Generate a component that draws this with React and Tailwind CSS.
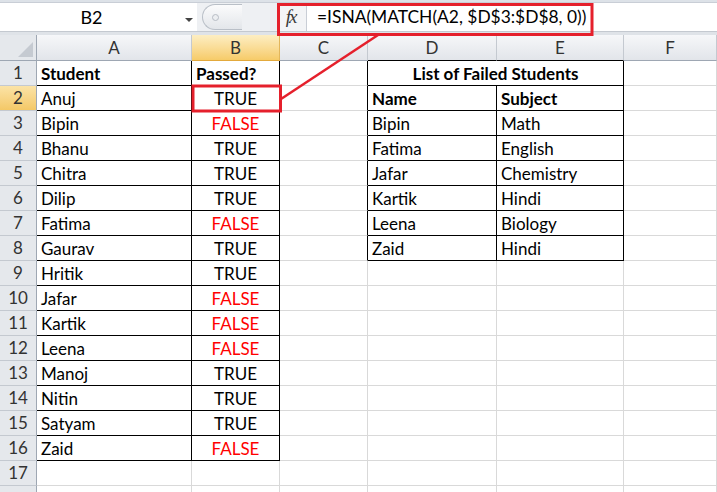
import React from 'react';

const students = [
    ['Anuj', true], ['Bipin', false], ['Bhanu', true], ['Chitra', true], ['Dilip', true],
    ['Fatima', false], ['Gaurav', true], ['Hritik', true], ['Jafar', false], ['Kartik', false],
    ['Leena', false], ['Manoj', true], ['Nitin', true], ['Satyam', true], ['Zaid', false],
];

const failed = [
    ['Bipin', 'Math'], ['Fatima', 'English'], ['Jafar', 'Chemistry'],
    ['Kartik', 'Hindi'], ['Leena', 'Biology'], ['Zaid', 'Hindi'],
];

const colLetters = ['A', 'B', 'C', 'D', 'E', 'F'];

// which cells carry a black border (right / bottom)
const blackRight = (r, c) =>
    ((c === 'A' || c === 'B') && r <= 16) || (c === 'C' && r <= 8) || (c === 'D' && r >= 2 && r <= 8) || (c === 'E' && r <= 8);
const blackBottom = (r, c) =>
    ((c === 'A' || c === 'B') && r <= 16) || ((c === 'D' || c === 'E') && r <= 8);

const cellText = (r, c) => {
    if (c === 'A') {
        if (r === 1) return { text: 'Student', bold: true };
        if (r <= 16) return { text: students[r - 2][0] };
    }
    if (c === 'B') {
        if (r === 1) return { text: 'Passed?', bold: true };
        if (r <= 16) {
            const ok = students[r - 2][1];
            return { text: ok ? 'TRUE' : 'FALSE', center: true, red: !ok };
        }
    }
    if (c === 'D' || c === 'E') {
        if (r === 2) return { text: c === 'D' ? 'Name' : 'Subject', bold: true };
        if (r >= 3 && r <= 8) return { text: failed[r - 3][c === 'D' ? 0 : 1] };
    }
    return { text: '' };
};

const Cell = ({ r, c, span }) => {
    const t = span ? { text: 'List of Failed Students', bold: true, center: true } : cellText(r, c);
    const right = blackRight(r, span ? 'E' : c) ? 'border-r-black' : 'border-r-[#d9d9d9]';
    const bottom = blackBottom(r, c) ? 'border-b-black' : 'border-b-[#d9d9d9]';
    return (
        <div
            className={`h-[25px] border-r border-b ${right} ${bottom} ${span ? 'col-span-2' : ''} flex items-center px-[4px] overflow-hidden whitespace-nowrap text-[17px] leading-none ${t.center ? 'justify-center' : ''} ${t.bold ? 'font-bold' : ''} ${t.red ? 'text-[#ff0000]' : 'text-black'}`}
        >
            {t.text}
        </div>
    );
};

const RowHeader = ({ n }) => (
    <div
        className={`h-[25px] border-r border-b border-r-[#9ea7b3] border-b-[#c4c9d0] flex items-center justify-center text-[17px] text-[#333] ${n === 2 ? 'bg-linear-to-b from-[#fbe3a6] to-[#f4c866]' : 'bg-[#e5e8ec]'}`}
    >
        {n <= 17 ? n : ''}
    </div>
);

const ColHeader = ({ l }) => {
    const sel = l === 'B';
    const bottom = l === 'D' || l === 'E' ? 'border-b-black' : sel ? 'border-b-[#e3a93c]' : 'border-b-[#9ea7b3]';
    return (
        <div
            className={`h-[26px] border-r border-b ${bottom} ${sel ? 'border-r-[#e3b65a] bg-linear-to-b from-[#fdeec2] to-[#f6cb68]' : 'border-r-[#c4c9d0] bg-linear-to-b from-[#f6f7f9] to-[#e2e5ea]'} flex items-center justify-center text-[17px] text-[#333]`}
        >
            {l}
        </div>
    );
};

export default function App() {
    const rows = Array.from({ length: 18 }, (_, i) => i + 1);

    return (
        <div className="relative w-[717px] h-[492px] overflow-hidden bg-white font-['Lato',sans-serif]">
            {/* ribbon edge */}
            <div className="h-[3px] bg-[#dde2e8] border-b border-[#c9ced6]" />

            {/* formula bar */}
            <div className="h-[28px] flex bg-white">
                <div className="w-[197px] relative flex items-center justify-center">
                    <span className="text-[18px] text-black pr-[14px]">B2</span>
                    <span className="absolute right-[4px] top-[15px] w-0 h-0 border-l-[4px] border-r-[4px] border-t-[4px] border-l-transparent border-r-transparent border-t-[#444]" />
                </div>
                <div className="w-[80px] bg-[#eef0f3] flex items-center pl-[5px]">
                    <div className="h-[26px] w-[40px] rounded-l-full border border-r-0 border-[#b9bfc7] bg-linear-to-b from-[#fbfbfc] to-[#e3e6ea] flex items-center pl-[9px]">
                        <div className="w-[7px] h-[7px] rounded-full border border-[#b7bcc4] bg-[#eceef1]" />
                    </div>
                </div>
                <div className="w-[30px] bg-[#f3f4f6] border-r border-[#c9ced6] flex items-center justify-center">
                    <span className="font-['Liberation_Serif',serif] italic text-[19px] text-[#3a3a3a] tracking-[-2px] pr-[2px]">fx</span>
                </div>
                <div className="flex-1 flex items-center pl-[10px] text-[17.4px] text-black whitespace-nowrap">
                    =ISNA(MATCH(A2, $D$3:$D$8, 0))
                </div>
            </div>
            <div className="h-[4px] bg-[#dfe3e8] border-t border-[#c4c9d0]" />

            {/* sheet */}
            <div className="grid grid-cols-[37px_155px_88px_88px_129px_127px_93px]">
                <div className="h-[26px] border-r border-b border-[#9ea7b3] bg-[#e5e8ec] relative">
                    <svg className="absolute right-[3px] bottom-[3px]" width="15" height="15" viewBox="0 0 15 15">
                        <polygon points="15,0 15,15 0,15" fill="#c5cad1" />
                    </svg>
                </div>
                {colLetters.map(l => <ColHeader key={l} l={l} />)}

                {rows.map(r => (
                    <React.Fragment key={r}>
                        <RowHeader n={r} />
                        <Cell r={r} c="A" />
                        <Cell r={r} c="B" />
                        <Cell r={r} c="C" />
                        {r === 1 ? (
                            <Cell r={r} c="D" span />
                        ) : (
                            <>
                                <Cell r={r} c="D" />
                                <Cell r={r} c="E" />
                            </>
                        )}
                        <Cell r={r} c="F" />
                    </React.Fragment>
                ))}
            </div>

            {/* callout overlay */}
            <svg className="absolute left-0 top-0 pointer-events-none" width="717" height="492">
                <rect x="278.5" y="4.5" width="313.5" height="30" fill="none" stroke="#e5202c" strokeWidth="3" />
                <rect x="193" y="86" width="87.5" height="25" fill="none" stroke="#e5202c" strokeWidth="3" />
                <line x1="281" y1="99" x2="378" y2="35" stroke="#e5202c" strokeWidth="2.5" />
            </svg>
        </div>
    );
}
